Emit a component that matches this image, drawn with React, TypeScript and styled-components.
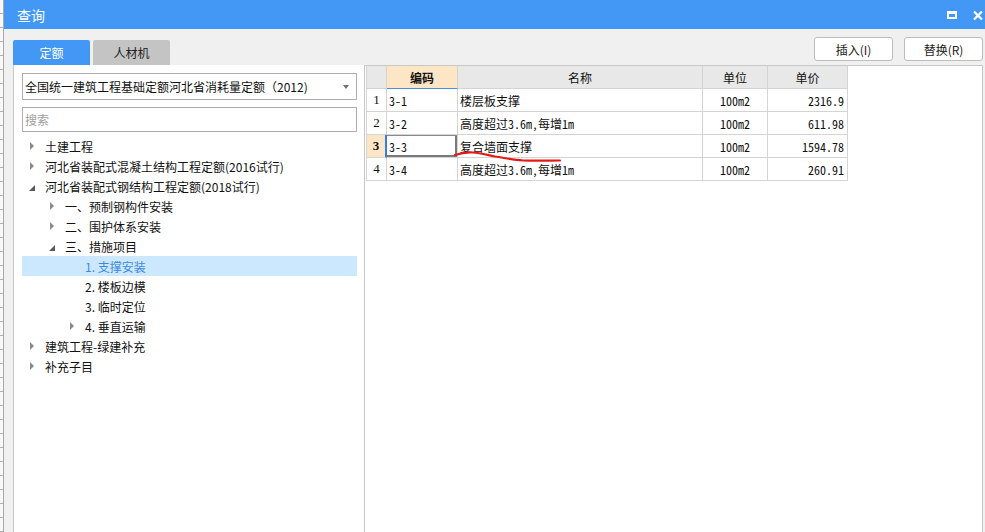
import React from "react";
import styled, { createGlobalStyle, css } from "styled-components";

const GlobalStyle = createGlobalStyle`
  html, body { margin: 0; padding: 0; background: #f0f0f0; overflow: hidden; }
  body { font-family: "Noto Sans CJK SC", "Microsoft YaHei", sans-serif; font-size: 12px; color: #1a1a1a; }
  * { box-sizing: border-box; }
`;

const BLUE = "#4398f6";

const Screen = styled.div`
  display: flex;
  width: 985px;
  height: 532px;
  overflow: hidden;
`;

const BackStrip = styled.div`
  width: 4px;
  flex: none;
  border-right: 1px solid #a8a8a8;
  background-color: #f8f8f8;
  background-image: repeating-linear-gradient(
    to bottom,
    transparent 0px,
    transparent 13px,
    #b0b0b0 13px,
    #b0b0b0 14px
  );
`;

const Dialog = styled.div`
  flex: 1;
  display: flex;
  flex-direction: column;
  min-width: 0;
`;

const TitleBar = styled.div`
  height: 29px;
  flex: none;
  background: ${BLUE};
  display: flex;
  align-items: center;
  justify-content: space-between;
  padding: 0 2px 0 13px;
`;

const Title = styled.div`
  color: #fff;
  font-size: 14px;
`;

const WindowControls = styled.div`
  display: flex;
  align-items: center;
  gap: 16px;
  padding-top: 1px;
`;

const MaxBox = styled.div`
  width: 10px;
  height: 8px;
  border: 2px solid #fff;
  border-top-width: 3px;
`;

const Body = styled.div`
  flex: 1;
  min-height: 0;
  display: flex;
  flex-direction: column;
  padding: 7px 2px 0 9px;
  background: #f0f0f0;
`;

const TopRow = styled.div`
  height: 29px;
  flex: none;
  display: flex;
  justify-content: space-between;
`;

const Tabs = styled.div`
  display: flex;
  gap: 3px;
  align-self: flex-end;
`;

const Tab = styled.div<{ $active?: boolean }>`
  width: 77px;
  height: 25px;
  display: flex;
  align-items: center;
  justify-content: center;
  font-size: 12px;
  border-radius: 2px 2px 0 0;
  background: ${(p) => (p.$active ? BLUE : "#c4c4c4")};
  color: ${(p) => (p.$active ? "#fff" : "#222")};
`;

const Actions = styled.div`
  display: flex;
  gap: 11px;
  padding-top: 1px;
`;

const ActionButton = styled.button`
  width: 79px;
  height: 24px;
  border: 1px solid #bdbdbd;
  border-radius: 3px;
  background: #fff;
  font-family: inherit;
  font-size: 12px;
  color: #222;
  padding: 0;
`;

const Content = styled.div`
  flex: 1;
  min-height: 0;
  display: flex;
`;

const LeftPanel = styled.div`
  width: 352px;
  flex: none;
  background: #fff;
  border-left: 1px solid #c8c8c8;
  border-right: 1px solid #c8c8c8;
  padding: 8px 7px 0 8px;
  display: flex;
  flex-direction: column;
`;

const Select = styled.div`
  height: 27px;
  border: 1px solid #adadad;
  display: flex;
  align-items: center;
  justify-content: space-between;
  padding: 0 7px 0 2px;
  font-size: 12px;
  color: #111;
`;

const SelectArrow = styled.span`
  width: 0;
  height: 0;
  border-left: 3.5px solid transparent;
  border-right: 3.5px solid transparent;
  border-top: 4px solid #707070;
`;

const SearchBox = styled.div`
  margin-top: 7px;
  height: 25px;
  border: 1px solid #adadad;
  display: flex;
  align-items: center;
  padding-left: 2px;
  color: #a0a0a0;
  font-size: 12px;
`;

const Tree = styled.div`
  margin-top: 4px;
  display: flex;
  flex-direction: column;
`;

const TreeRow = styled.div<{ $level: number; $selected?: boolean }>`
  height: 20px;
  display: flex;
  align-items: center;
  padding-left: ${(p) => 5 + p.$level * 20}px;
  background: ${(p) => (p.$selected ? "#cce8ff" : "transparent")};
  color: ${(p) => (p.$selected ? "#3f8ae0" : "#111")};
  font-size: 12px;
  white-space: nowrap;
`;

const Toggle = styled.span`
  width: 18px;
  height: 20px;
  flex: none;
  display: flex;
  align-items: center;
`;

const Caret = styled.span<{ $open: boolean }>`
  width: 0;
  height: 0;
  ${(p) =>
    p.$open
      ? css`
          margin-left: 2px;
          margin-top: 3px;
          border-left: 6px solid transparent;
          border-bottom: 6px solid #5a5a5a;
        `
      : css`
          margin-left: 3px;
          border-top: 4px solid transparent;
          border-bottom: 4px solid transparent;
          border-left: 4px solid #8a8a8a;
        `}
`;

const RightPanel = styled.div`
  flex: 1;
  min-width: 0;
  background: #fff;
  border-top: 1px solid #c8c8c8;
  border-right: 1px solid #c8c8c8;
  padding-left: 1px;
`;

const Grid = styled.div`
  position: relative;
  display: grid;
  grid-template-columns: 20px 71px 245px 65px 80px;
  grid-auto-rows: 23px;
  width: max-content;
  border-left: 1px solid #d4d4d4;
`;

type Align = "left" | "center" | "right";

const Cell = styled.div<{
  $align?: Align;
  $head?: boolean;
  $hl?: boolean;
  $bold?: boolean;
  $blueRight?: boolean;
  $blueBottom?: boolean;
  $current?: boolean;
  $serif?: boolean;
}>`
  display: flex;
  align-items: center;
  justify-content: ${(p) =>
    p.$align === "right" ? "flex-end" : p.$align === "center" ? "center" : "flex-start"};
  padding: ${(p) => (p.$align === "right" ? "0 3px 0 0" : p.$align === "center" ? "0" : "0 0 0 2px")};
  border-right: 1px solid #d4d4d4;
  border-bottom: 1px solid #d4d4d4;
  background: ${(p) => (p.$hl ? "#fde6c6" : p.$head ? "#e8e8e8" : "#fff")};
  font-weight: ${(p) => (p.$bold ? 700 : 400)};
  font-family: ${(p) =>
    p.$serif
      ? `"Liberation Serif", "Noto Sans CJK SC", serif`
      : `"Noto Sans Mono CJK SC", "Noto Sans CJK SC", monospace`};
  font-size: ${(p) => (p.$serif ? "13px" : "12px")};
  color: #111;
  white-space: nowrap;
  overflow: hidden;
  ${(p) => p.$blueRight && css`border-right: 2px solid #2f7fe6;`}
  ${(p) => p.$blueBottom && css`border-bottom: 1px solid #4a90e2;`}
  ${(p) =>
    p.$current &&
    css`
      box-shadow: inset 0 2px 0 -1px #8a8a8a, inset -2px 0 0 #7a7a7a, inset 0 -2px 0 #7a7a7a;
    `}
`;

const Annotation = styled.svg`
  position: absolute;
  left: 0;
  top: 0;
  width: 480px;
  height: 120px;
  pointer-events: none;
  overflow: visible;
`;

type TreeItem = { label: string; level: number; state: "open" | "closed" | "leaf"; selected?: boolean };

const treeItems: TreeItem[] = [
  { label: "土建工程", level: 0, state: "closed" },
  { label: "河北省装配式混凝土结构工程定额(2016试行)", level: 0, state: "closed" },
  { label: "河北省装配式钢结构工程定额(2018试行)", level: 0, state: "open" },
  { label: "一、预制钢构件安装", level: 1, state: "closed" },
  { label: "二、围护体系安装", level: 1, state: "closed" },
  { label: "三、措施项目", level: 1, state: "open" },
  { label: "1. 支撑安装", level: 2, state: "leaf", selected: true },
  { label: "2. 楼板边模", level: 2, state: "leaf" },
  { label: "3. 临时定位", level: 2, state: "leaf" },
  { label: "4. 垂直运输", level: 2, state: "closed" },
  { label: "建筑工程-绿建补充", level: 0, state: "closed" },
  { label: "补充子目", level: 0, state: "closed" },
];

const rows = [
  { n: "1", code: "3-1", name: "楼层板支撑", unit: "100m2", price: "2316.9" },
  { n: "2", code: "3-2", name: "高度超过3.6m,每增1m", unit: "100m2", price: "611.98" },
  { n: "3", code: "3-3", name: "复合墙面支撑", unit: "100m2", price: "1594.78" },
  { n: "4", code: "3-4", name: "高度超过3.6m,每增1m", unit: "100m2", price: "260.91" },
];

const CURRENT = 2;

export default function App() {
  return (
    <>
      <GlobalStyle />
      <Screen>
        <BackStrip />
        <Dialog>
          <TitleBar>
            <Title>查询</Title>
            <WindowControls>
              <MaxBox />
              <svg width="10" height="9" viewBox="0 0 10 9">
                <path d="M1 0.5 L9 8.5 M9 0.5 L1 8.5" stroke="#fff" strokeWidth="2.2" />
              </svg>
            </WindowControls>
          </TitleBar>
          <Body>
            <TopRow>
              <Tabs>
                <Tab $active>定额</Tab>
                <Tab>人材机</Tab>
              </Tabs>
              <Actions>
                <ActionButton>插入(I)</ActionButton>
                <ActionButton>替换(R)</ActionButton>
              </Actions>
            </TopRow>
            <Content>
              <LeftPanel>
                <Select>
                  <span>全国统一建筑工程基础定额河北省消耗量定额（2012)</span>
                  <SelectArrow />
                </Select>
                <SearchBox>搜索</SearchBox>
                <Tree>
                  {treeItems.map((it) => (
                    <TreeRow key={it.label} $level={it.level} $selected={it.selected}>
                      <Toggle>{it.state !== "leaf" && <Caret $open={it.state === "open"} />}</Toggle>
                      <span>{it.label}</span>
                    </TreeRow>
                  ))}
                </Tree>
              </LeftPanel>
              <RightPanel>
                <Grid>
                  <Cell $head $align="center" />
                  <Cell $hl $bold $blueBottom $align="center">编码</Cell>
                  <Cell $head $align="center">名称</Cell>
                  <Cell $head $align="center">单位</Cell>
                  <Cell $head $align="center">单价</Cell>
                  {rows.map((r, i) => {
                    const cur = i === CURRENT;
                    return (
                      <React.Fragment key={r.n}>
                        <Cell $align="center" $serif $hl={cur} $bold={cur} $blueRight={cur}>
                          {r.n}
                        </Cell>
                        <Cell $current={cur}>{r.code}</Cell>
                        <Cell>{r.name}</Cell>
                        <Cell $align="center">{r.unit}</Cell>
                        <Cell $align="right">{r.price}</Cell>
                      </React.Fragment>
                    );
                  })}
                  <Annotation viewBox="0 0 480 120">
                    <path
                      d="M88 89 C 94 87, 100 86, 106 86.5 C 114 87, 120 89, 128 90.5 C 138 92, 146 94, 156 94.5 C 170 95, 182 94.5, 193 94.5"
                      fill="none"
                      stroke="#e21a1a"
                      strokeWidth="2.2"
                      strokeLinecap="round"
                    />
                  </Annotation>
                </Grid>
              </RightPanel>
            </Content>
          </Body>
        </Dialog>
      </Screen>
    </>
  );
}
